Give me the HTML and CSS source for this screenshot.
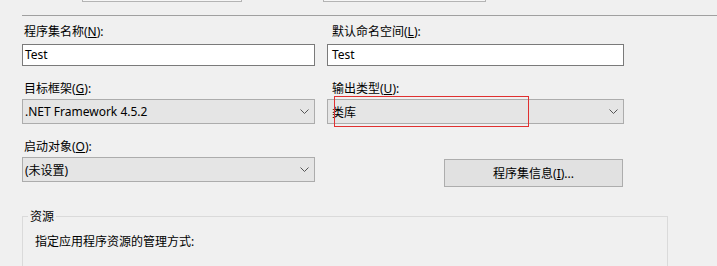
FILE: index.html
```html
<!DOCTYPE html>
<html lang="zh-CN">
<head>
<meta charset="utf-8">
<title>应用程序</title>
<link rel="stylesheet" href="styles.css">
</head>
<body>
<div class="tabs">
  <div class="tab tab-a"></div>
  <div class="tab tab-b"></div>
</div>
<div class="sep"></div>
<div class="form">
  <div class="field">
    <label class="label">程序集名称(<u>N</u>):</label>
    <div class="textbox">Test</div>
  </div>
  <div class="field field-r">
    <label class="label">默认命名空间(<u>L</u>):</label>
    <div class="textbox">Test</div>
  </div>
  <div class="field">
    <label class="label">目标框架(<u>G</u>):</label>
    <div class="combo"><span>.NET Framework 4.5.2</span><svg class="chev" width="9" height="5" viewBox="0 0 9 5"><path d="M0.5 0.5 L4.5 4.5 L8.5 0.5" fill="none" stroke="#555" stroke-width="1"/></svg></div>
  </div>
  <div class="field field-r">
    <label class="label">输出类型(<u>U</u>):</label>
    <div class="combo"><span>类库</span><svg class="chev" width="9" height="5" viewBox="0 0 9 5"><path d="M0.5 0.5 L4.5 4.5 L8.5 0.5" fill="none" stroke="#555" stroke-width="1"/></svg><div class="highlight"></div></div>
  </div>
  <div class="field">
    <label class="label">启动对象(<u>O</u>):</label>
    <div class="combo"><span>(未设置)</span><svg class="chev" width="9" height="5" viewBox="0 0 9 5"><path d="M0.5 0.5 L4.5 4.5 L8.5 0.5" fill="none" stroke="#555" stroke-width="1"/></svg></div>
  </div>
  <div class="field field-btn">
    <button class="button" type="button">程序集信息(<u>I</u>)...</button>
  </div>
</div>
<fieldset class="group">
  <legend class="legend">资源</legend>
  <p class="group-text">指定应用程序资源的管理方式:</p>
</fieldset>
</body>
</html>
```
FILE: styles.css
```css
* { box-sizing: border-box; }
html, body { margin: 0; padding: 0; }
body {
  background: #f0f0f0;
  font-family: "Noto Sans", "Noto Sans CJK SC", sans-serif;
  font-size: 12px;
  color: #000;
  width: 717px;
  height: 266px;
  overflow: hidden;
}
.tabs {
  display: flex;
  gap: 81px;
  padding-left: 82px;
  height: 2px;
}
.tab {
  height: 2px;
  border: 1px solid #b4b4b4;
  border-top: none;
  background: #f6f6f6;
}
.tab-a { width: 160px; }
.tab-b { width: 163px; }
.sep {
  margin: 13px 0 0 22px;
  height: 1px;
  background: #a0a0a0;
}
.form {
  display: grid;
  grid-template-columns: 293px 297px;
  column-gap: 12px;
  row-gap: 14px;
  padding: 7px 0 0 22px;
}
.field { display: flex; flex-direction: column; }
.label {
  display: block;
  line-height: 17px;
  height: 17px;
  margin-bottom: 2px;
  padding-left: 2px;
}
.field-r .label { padding-left: 5px; }
.textbox {
  margin-top: 2px;
  height: 22px;
  line-height: 20px;
  background: #fff;
  border: 1px solid #7a7a7a;
  padding: 0 2px;
}
.field-r .textbox { padding-left: 4px; }
.combo {
  position: relative;
  height: 25px;
  display: flex;
  align-items: center;
  justify-content: space-between;
  background: #e5e5e5;
  border: 1px solid #acacac;
  padding: 0 5px 0 2px;
}
.field-r .combo { padding-left: 4px; }
.chev { display: block; }
.highlight {
  position: absolute;
  left: 6px;
  top: -4px;
  width: 195px;
  height: 31px;
  border: 1px solid #e03030;
  z-index: 2;
}
.field-btn { align-items: flex-end; }
.button {
  margin: 21px 1px 0 0;
  width: 179px;
  height: 28px;
  background: #e1e1e1;
  border: 1px solid #adadad;
  font-family: "Noto Sans", "Noto Sans CJK SC", sans-serif;
  font-size: 12px;
  color: #000;
  padding: 0;
}
.group {
  margin: 21px 0 0 22px;
  width: 646px;
  height: 63px;
  border: 1px solid #dadada;
  border-bottom: none;
  padding: 0;
}
.legend {
  margin-left: 5px;
  padding: 0 2px;
  line-height: 17px;
}
.group-text {
  margin: 8px 0 0 12px;
  line-height: 17px;
}
```
